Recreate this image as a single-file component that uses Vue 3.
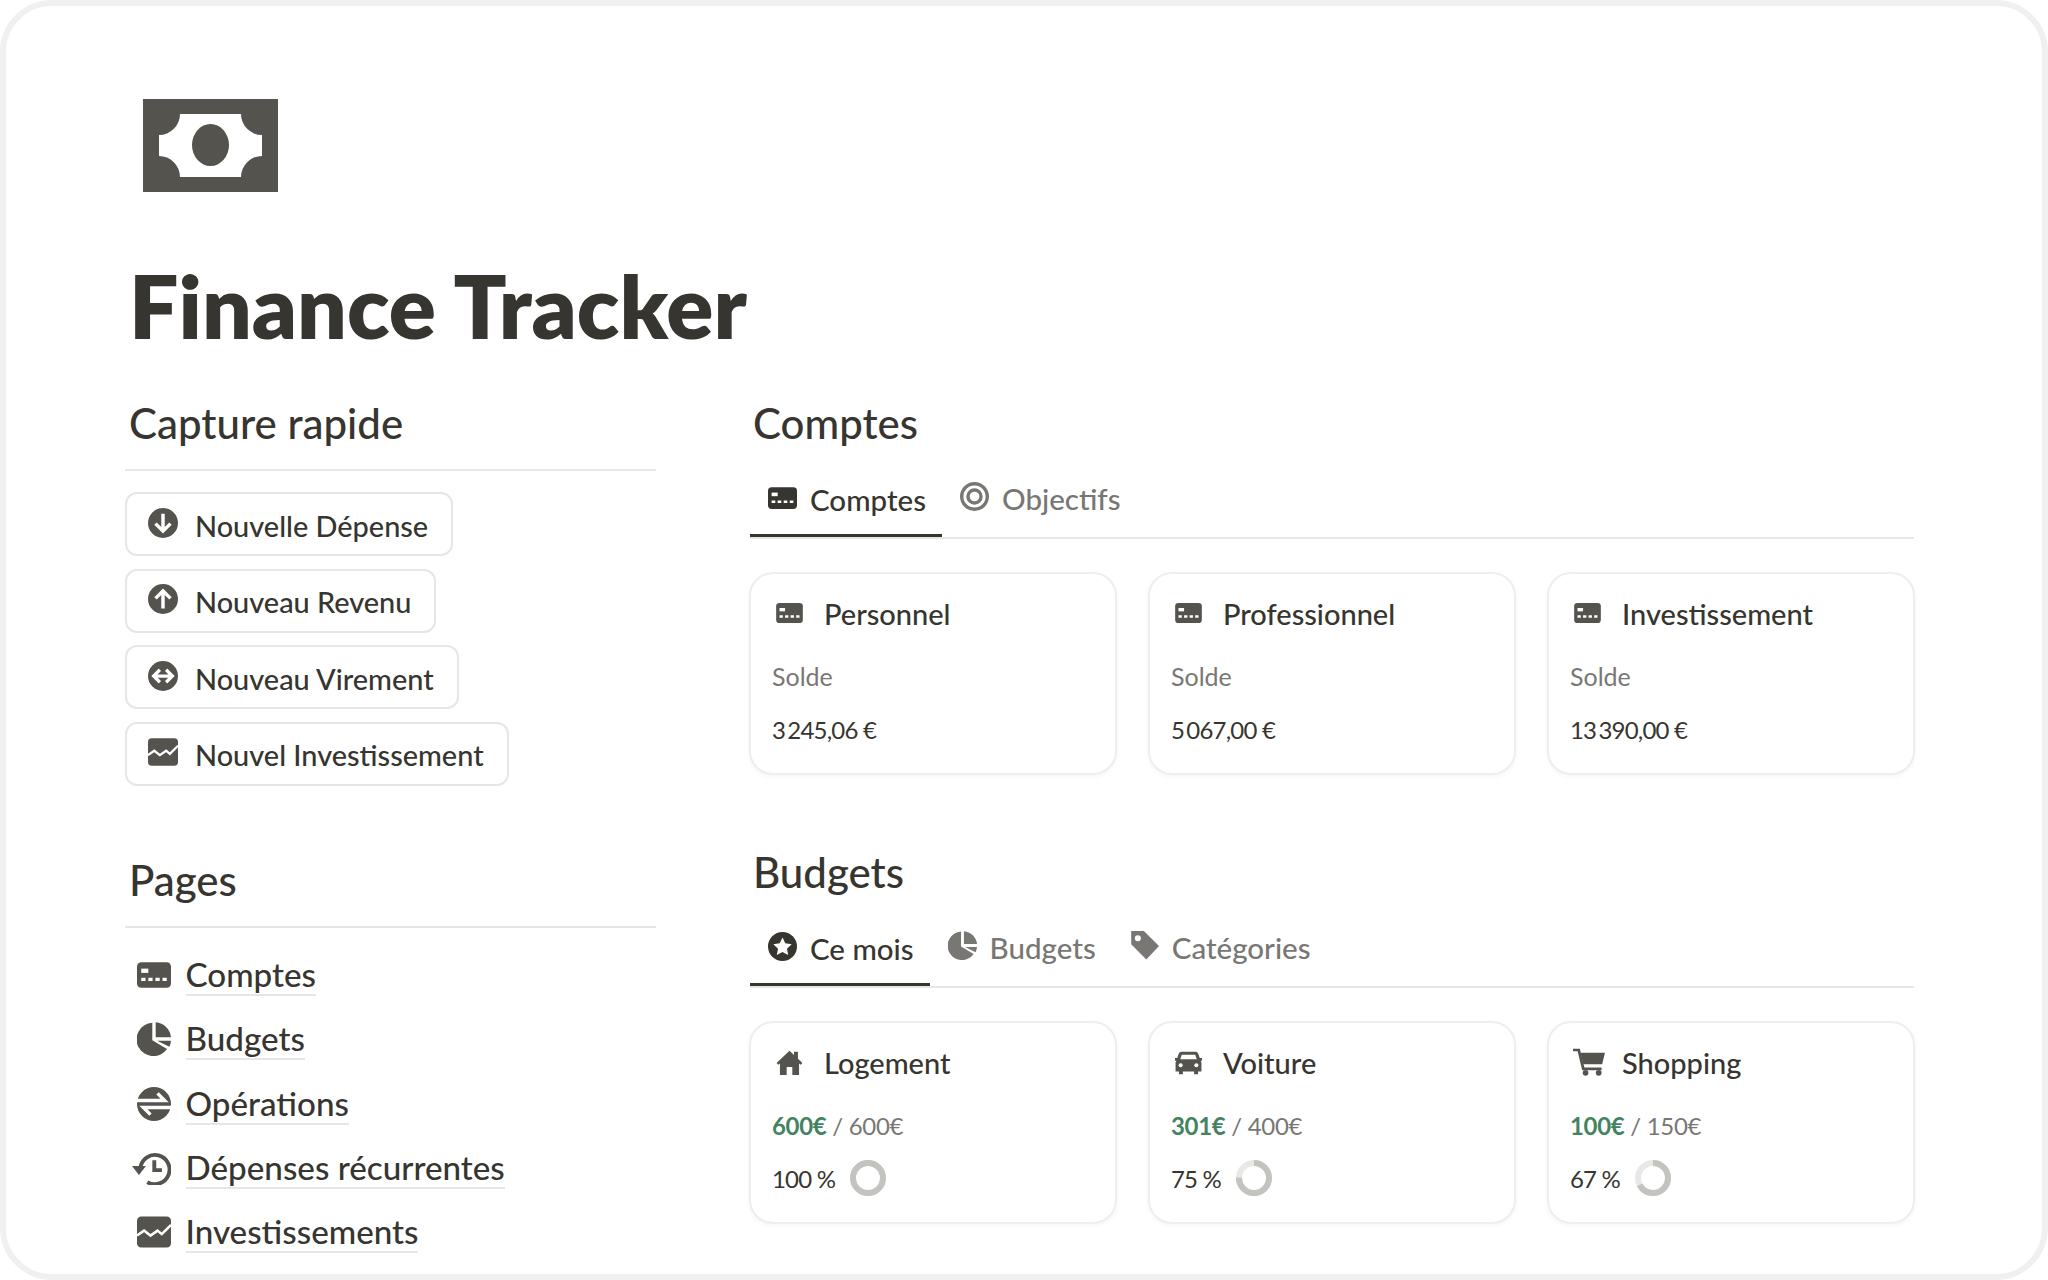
<script setup>
const captures = [
  { icon: 'down', label: 'Nouvelle Dépense' },
  { icon: 'up', label: 'Nouveau Revenu' },
  { icon: 'swap', label: 'Nouveau Virement' },
  { icon: 'chart', label: 'Nouvel Investissement' }
]
const pages = [
  { icon: 'card', label: 'Comptes' },
  { icon: 'pie', label: 'Budgets' },
  { icon: 'ops', label: 'Opérations' },
  { icon: 'history', label: 'Dépenses récurrentes' },
  { icon: 'chart', label: 'Investissements' }
]
const accountTabs = [
  { icon: 'card', label: 'Comptes', active: true },
  { icon: 'target', label: 'Objectifs' }
]
const budgetTabs = [
  { icon: 'star', label: 'Ce mois', active: true },
  { icon: 'pie', label: 'Budgets' },
  { icon: 'tag', label: 'Catégories' }
]
const accounts = [
  { name: 'Personnel', amount: '3\u2009245,06 €' },
  { name: 'Professionnel', amount: '5\u2009067,00 €' },
  { name: 'Investissement', amount: '13\u2009390,00 €' }
]
const budgets = [
  { icon: 'home', name: 'Logement', spent: '600€', total: '600€', pct: 100 },
  { icon: 'car', name: 'Voiture', spent: '301€', total: '400€', pct: 75 },
  { icon: 'cart', name: 'Shopping', spent: '100€', total: '150€', pct: 67 }
]
const R = 15
const C = 2 * Math.PI * R
</script>

<template>
  <div class="frame">
    <svg class="defs" width="0" height="0" aria-hidden="true">
      <symbol id="i-card" viewBox="0 0 24 18">
        <rect x="0" y="0" width="24" height="18" rx="3" fill="currentColor" />
        <rect x="3" y="4.500" width="5" height="3" fill="#fff" />
        <path d="M3 11h3v2.200H3zM8 11h3v2.200H8zM13 11h3v2.200h-3zM18 11h3v2.200h-3z" fill="#fff" />
      </symbol>
      <symbol id="i-down" viewBox="0 0 24 24">
        <circle cx="12" cy="12" r="12" fill="currentColor" />
        <path d="M12 4.500v14M6 12.500l6 6 6-6" fill="none" stroke="#fff" stroke-width="2.800" />
      </symbol>
      <symbol id="i-up" viewBox="0 0 24 24">
        <circle cx="12" cy="12" r="12" fill="currentColor" />
        <path d="M12 19.500v-14M6 11.500l6-6 6 6" fill="none" stroke="#fff" stroke-width="2.800" />
      </symbol>
      <symbol id="i-swap" viewBox="0 0 24 24">
        <circle cx="12" cy="12" r="12" fill="currentColor" />
        <path d="M5 12h14M9.500 7l-5 5 5 5M14.500 7l5 5-5 5" fill="none" stroke="#fff" stroke-width="2.600" />
      </symbol>
      <symbol id="i-chart" viewBox="0 0 24 22">
        <rect x="0" y="0" width="24" height="22" rx="3" fill="currentColor" />
        <path d="M0 13.500l5-3.500 4.500 3.500 5-3.500 3 2.500 6.500-6.500" fill="none" stroke="#fff" stroke-width="1.800" />
      </symbol>
      <symbol id="i-pie" viewBox="0 0 24 24">
        <path d="M10.800 0.500A11.800 11.800 0 1 0 21.200 19L10.800 12.800Z" fill="currentColor" />
        <path d="M13.200 0.200A11.800 11.800 0 0 1 24 10.800H13.200Z" fill="currentColor" />
        <path d="M14.200 13.200H24A11.800 11.800 0 0 1 22.800 17.500Z" fill="currentColor" />
      </symbol>
      <symbol id="i-ops" viewBox="0 0 24 24">
        <circle cx="12" cy="12" r="12" fill="currentColor" />
        <path d="M-1 9.500H19.500L14.500 4.500M25 14.500H4.500L9.500 19.500" fill="none" stroke="#fff" stroke-width="2.400" />
      </symbol>
      <symbol id="i-history" viewBox="0 0 28 24">
        <path d="M6 12A10.500 10.500 0 1 1 11 22.100" fill="none" stroke="currentColor" stroke-width="2.800" />
        <path d="M0 10.500H10L5 17Z" fill="currentColor" />
        <path d="M16 6.500V13.500H21.500" fill="none" stroke="currentColor" stroke-width="2.800" />
      </symbol>
      <symbol id="i-target" viewBox="0 0 24 24">
        <circle cx="12" cy="12" r="10.600" fill="none" stroke="currentColor" stroke-width="2.800" />
        <circle cx="12" cy="12" r="5.400" fill="none" stroke="currentColor" stroke-width="2.800" />
      </symbol>
      <symbol id="i-star" viewBox="0 0 24 24">
        <circle cx="12" cy="12" r="12" fill="currentColor" />
        <path d="M12 4.500l2.300 4.900 5.300.7-3.900 3.700 1 5.300-4.700-2.600-4.700 2.600 1-5.300-3.900-3.700 5.300-.7z" fill="#fff" />
      </symbol>
      <symbol id="i-tag" viewBox="0 0 24 24">
        <path fill-rule="evenodd" d="M1 0H11.500L24 12.500 13.500 23.500 1 11ZM6.500 3.500a2.500 2.500 0 1 0 0 5 2.500 2.500 0 0 0 0-5Z" fill="currentColor" />
      </symbol>
      <symbol id="i-home" viewBox="0 0 24 24">
        <path d="M12 1.500L0.500 12.500 2 14l1.500-1.200V23h6v-7h5v7h6V12.800L22 14l1.500-1.500-4-3.800V2.500h-3.500v2.800Z" fill="currentColor" />
      </symbol>
      <symbol id="i-car" viewBox="0 0 24 22">
        <path d="M5.500 1.500H18.500Q20 1.500 20.600 3L22 7H24V9.500H22.800L23.500 11V19H20.500V21.500H17V19H7V21.500H3.500V19H0.500V11L1.200 9.500H0V7H2L3.400 3Q4 1.500 5.500 1.500Z" fill="currentColor" />
        <path d="M6 4H18L19.300 8H4.700Z" fill="#fff" />
        <circle cx="5" cy="13.500" r="1.800" fill="#fff" />
        <circle cx="19" cy="13.500" r="1.800" fill="#fff" />
      </symbol>
      <symbol id="i-cart" viewBox="0 0 28 24">
        <path d="M0 1.500H5L9 18H25" fill="none" stroke="currentColor" stroke-width="2.400" />
        <path d="M6.500 4H28L25.500 14H9Z" fill="currentColor" />
        <circle cx="11" cy="21.500" r="2.500" fill="currentColor" />
        <circle cx="22.500" cy="21.500" r="2.500" fill="currentColor" />
      </symbol>
    </svg>

    <svg class="logo" viewBox="0 0 135 93" aria-label="Finance Tracker">
      <rect width="135" height="93" fill="#55534e" />
      <path d="M37 15H98A21 21 0 0 0 119 36V57A21 21 0 0 0 98 78H37A21 21 0 0 0 16 57V36A21 21 0 0 0 37 15Z" fill="#fff" />
      <ellipse cx="67.500" cy="46" rx="18.500" ry="21" fill="#55534e" />
    </svg>

    <h1 class="title">Finance Tracker</h1>

    <div class="columns">
      <aside class="left">
        <h2 class="heading ruled">Capture rapide</h2>
        <div class="captures">
          <div class="capture" v-for="c in captures" :key="c.label">
            <svg class="capture-icon"><use :href="'#i-' + c.icon" /></svg>
            <span class="capture-label">{{ c.label }}</span>
          </div>
        </div>

        <h2 class="heading ruled pages-heading">Pages</h2>
        <ul class="pages">
          <li class="page" v-for="p in pages" :key="p.label">
            <span class="page-icon"><svg :class="'pi-' + p.icon"><use :href="'#i-' + p.icon" /></svg></span>
            <span class="page-label">{{ p.label }}</span>
          </li>
        </ul>
      </aside>

      <main class="right">
        <section>
          <h2 class="heading">Comptes</h2>
          <div class="tabs">
            <div class="tab" v-for="t in accountTabs" :key="t.label" :class="{ active: t.active }">
              <svg class="tab-icon" :class="'ti-' + t.icon"><use :href="'#i-' + t.icon" /></svg>
              <span>{{ t.label }}</span>
            </div>
          </div>
          <div class="cards">
            <article class="card" v-for="a in accounts" :key="a.name">
              <div class="card-title">
                <span class="card-icon"><svg class="ci-card"><use href="#i-card" /></svg></span>
                <span>{{ a.name }}</span>
              </div>
              <div class="line muted solde">Solde</div>
              <div class="line amount">{{ a.amount }}</div>
            </article>
          </div>
        </section>

        <section class="budgets">
          <h2 class="heading">Budgets</h2>
          <div class="tabs">
            <div class="tab" v-for="t in budgetTabs" :key="t.label" :class="{ active: t.active }">
              <svg class="tab-icon" :class="'ti-' + t.icon"><use :href="'#i-' + t.icon" /></svg>
              <span>{{ t.label }}</span>
            </div>
          </div>
          <div class="cards">
            <article class="card" v-for="b in budgets" :key="b.name">
              <div class="card-title">
                <span class="card-icon"><svg :class="'ci-' + b.icon"><use :href="'#i-' + b.icon" /></svg></span>
                <span>{{ b.name }}</span>
              </div>
              <div class="line muted tally"><strong class="spent">{{ b.spent }}</strong> / {{ b.total }}</div>
              <div class="line amount progress">
                <span>{{ b.pct }} %</span>
                <svg class="ring" viewBox="0 0 36 36">
                  <circle cx="18" cy="18" :r="R" class="ring-track" />
                  <circle cx="18" cy="18" :r="R" class="ring-fill" :stroke-dasharray="`${(C * b.pct) / 100} ${C}`" transform="rotate(-90 18 18)" />
                </svg>
              </div>
            </article>
          </div>
        </section>
      </main>
    </div>
  </div>
</template>

<style>
html, body { margin: 0; background: #fff; }
</style>

<style scoped>
.frame {
  box-sizing: border-box;
  width: 2048px;
  height: 1280px;
  border: 6px solid #f0f0ef;
  border-radius: 52px;
  padding: 93px 128px 0 119px;
  overflow: hidden;
  background: #fff;
  color: #37352f;
  font-family: "Lato", "Noto Sans", sans-serif;
}
.defs { position: absolute; }
svg { display: block; overflow: visible; }
.logo { width: 135px; height: 93px; margin-left: 18px; }
.title {
  margin: 64px 0 43px 4px;
  font-size: 87.500px;
  line-height: 100px;
  font-weight: 800;
}
.columns { display: grid; grid-template-columns: 531px 1164px; column-gap: 94px; }
.heading {
  margin: 0;
  padding-left: 4px;
  font-size: 42px;
  line-height: 48px;
  font-weight: 500;
}
.right .heading { padding-left: 3px; }
.ruled { padding-bottom: 22px; border-bottom: 2px solid #e6e6e4; }
.captures { display: flex; flex-direction: column; align-items: flex-start; gap: 12.500px; margin-top: 21px; }
.capture {
  box-sizing: border-box;
  height: 64px;
  display: flex;
  align-items: center;
  gap: 17px;
  padding: 0 23px 0 21px;
  border: 2px solid #e6e6e4;
  border-radius: 12px;
  font-size: 28.900px;
  font-weight: 500;
}
.capture-label { padding-top: 2px; }
.capture-icon { width: 30px; height: 30px; color: #55534e; margin-top: -3px; }
.pages-heading { margin-top: 70.500px; }
.pages { list-style: none; margin: 15px 0 0; padding: 0; }
.page { height: 64.300px; display: flex; align-items: center; font-size: 33.200px; font-weight: 500; }
.page-icon { box-sizing: border-box; width: 60.500px; padding-right: 3px; flex: none; display: flex; justify-content: center; color: #55534e; }
.page-icon svg { width: 34px; height: 34px; }
.page-icon .pi-history { width: 39px; height: 34px; margin-left: -4px; }
.page-label { border-bottom: 2px solid #e6e6e4; line-height: 40px; }
.tabs { display: flex; margin-top: 22px; height: 68px; border-bottom: 2px solid #e6e6e4; }
.tab {
  display: flex;
  align-items: center;
  gap: 13px;
  padding: 0 16px 10px 18px;
  font-size: 29.500px;
  font-weight: 500;
  color: #787774;
}
.tab.active { color: #37352f; border-bottom: 3px solid #37352f; padding-top: 3px; padding-bottom: 7px; }
.tab-icon { width: 29px; height: 29px; margin-top: -4px; }
.ti-card { height: 22px; }
.cards { display: grid; grid-template-columns: repeat(3, 368px); column-gap: 31px; margin: 33px 0 0 -1px; }
.card {
  box-sizing: border-box;
  height: 203px;
  padding: 18px 21px 0;
  border: 2px solid #eeeeec;
  border-radius: 24px;
  box-shadow: 0 2px 5px rgba(0, 0, 0, 0.04);
  background: #fff;
}
.card-title { display: flex; align-items: center; height: 42px; font-size: 29px; font-weight: 500; }
.card-icon { width: 52px; flex: none; color: #55534e; display: flex; padding-left: 4px; box-sizing: border-box; }
.card-icon svg { width: 27px; height: 27px; }
.card-icon .ci-card { height: 20px; }
.card-icon .ci-cart { width: 32px; height: 28px; margin-left: -1px; }
.line { font-size: 24px; display: flex; align-items: center; }
.muted { margin-top: 27px; height: 30px; color: #787774; white-space: pre; }
.solde { font-size: 25px; }
.tally { letter-spacing: -0.300px; }
.spent { color: #448361; font-weight: 700; }
.amount { margin-top: 23px; height: 30px; letter-spacing: -0.800px; }
.progress { gap: 15px; margin-top: 20px; height: 36px; }
.ring { width: 36px; height: 36px; }
.ring-track { fill: none; stroke: #e8e8e6; stroke-width: 6; }
.ring-fill { fill: none; stroke: #c3c3bf; stroke-width: 6; }
.budgets { margin-top: 73px; }
</style>
